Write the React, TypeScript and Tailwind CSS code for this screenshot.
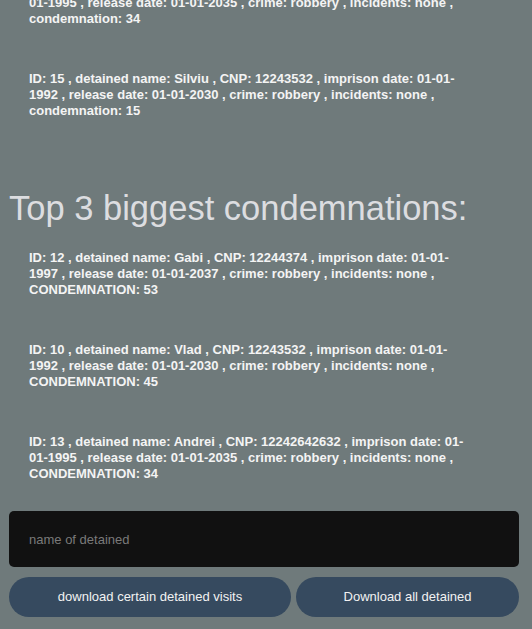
import React from "react";

const items1 = [
  "ID: 13 , detained name: Andrei , CNP: 12242642632 , imprison date: 01-01-1995 , release date: 01-01-2035 , crime: robbery , incidents: none , condemnation: 34",
  "ID: 15 , detained name: Silviu , CNP: 12243532 , imprison date: 01-01-1992 , release date: 01-01-2030 , crime: robbery , incidents: none , condemnation: 15",
];

const items2 = [
  "ID: 12 , detained name: Gabi , CNP: 12244374 , imprison date: 01-01-1997 , release date: 01-01-2037 , crime: robbery , incidents: none , CONDEMNATION: 53",
  "ID: 10 , detained name: Vlad , CNP: 12243532 , imprison date: 01-01-1992 , release date: 01-01-2030 , crime: robbery , incidents: none , CONDEMNATION: 45",
  "ID: 13 , detained name: Andrei , CNP: 12242642632 , imprison date: 01-01-1995 , release date: 01-01-2035 , crime: robbery , incidents: none , CONDEMNATION: 34",
];

function Item({ text }: { text: string }) {
  return (
    <p className="w-[462px] pl-[20px] text-[13px] leading-[16px] font-bold text-[#f4f4f4] [font-family:'Liberation_Sans',Arial,sans-serif]">
      {text}
    </p>
  );
}

export default function App() {
  return (
    <div className="h-[629px] w-full overflow-hidden bg-[#6f7a7b]">
      <div className="-mt-[21px] pl-[9px] pr-[13px]">
        <div className="flex flex-col gap-[44px]">
          {items1.map((t, i) => (
            <Item key={i} text={t} />
          ))}
        </div>
        <h1 className="mt-[69px] h-[40px] text-[34.5px] leading-[40px] text-[#dcdde0] [font-family:'Liberation_Sans',Arial,sans-serif]">
          Top 3 biggest condemnations:
        </h1>
        <div className="mt-[22px] flex flex-col gap-[44px]">
          {items2.map((t, i) => (
            <Item key={i} text={t} />
          ))}
        </div>
        <input
          placeholder="name of detained"
          className="mt-[29px] block h-[56px] w-[510px] rounded-[5px] bg-[#111111] pl-[20px] text-[13px] text-[#dddddd] placeholder:text-[#7a7a7a] outline-none [font-family:'Liberation_Sans',Arial,sans-serif]"
        />
        <div className="mt-[10px] flex gap-[5px]">
          <button className="h-[40px] w-[282px] rounded-full bg-[#364a5f] text-[13px] text-[#f2f2f2] [font-family:'Liberation_Sans',Arial,sans-serif]">
            download certain detained visits
          </button>
          <button className="h-[40px] w-[223px] rounded-full bg-[#364a5f] text-[13px] text-[#f2f2f2] [font-family:'Liberation_Sans',Arial,sans-serif]">
            Download all detained
          </button>
        </div>
      </div>
    </div>
  );
}
